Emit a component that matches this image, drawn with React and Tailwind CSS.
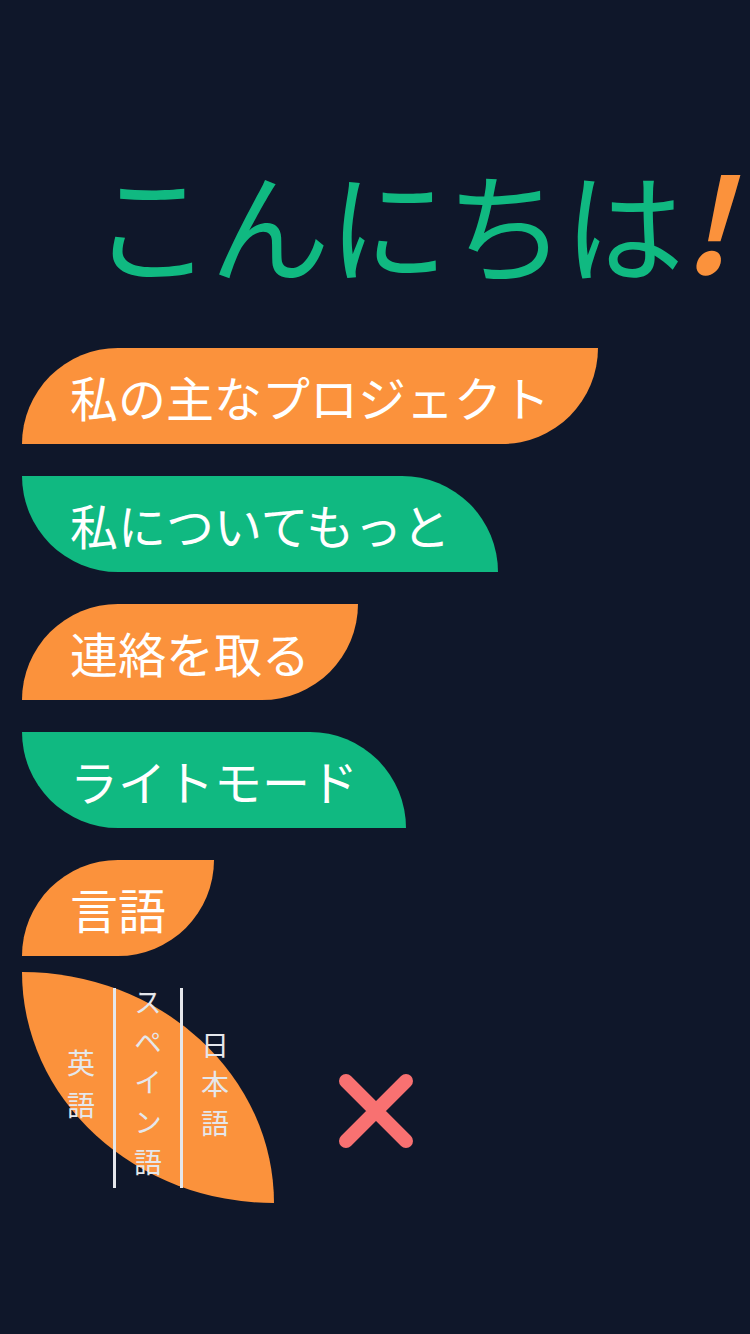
import React from 'react'

const FONT = { fontFamily: "'Noto Sans CJK JP', 'Noto Sans', sans-serif" }

const menu = [
  { label: '私の主なプロジェクト', tone: 'orange', width: 'w-[576px]' },
  { label: '私についてもっと', tone: 'green', width: 'w-[476px]' },
  { label: '連絡を取る', tone: 'orange', width: 'w-[336px]' },
  { label: 'ライトモード', tone: 'green', width: 'w-[384px]' },
  { label: '言語', tone: 'orange', width: 'w-[192px]' },
]

function MenuButton({ label, tone, width }) {
  const shape =
    tone === 'orange'
      ? 'bg-[#fb923c] rounded-tl-[100px] rounded-br-[100px]'
      : 'bg-[#10b981] rounded-tr-[100px] rounded-bl-[100px]'
  return (
    <button
      className={`${width} ${shape} h-24 flex items-center pl-12 text-white text-[48px] leading-none whitespace-nowrap`}
    >
      {label}
    </button>
  )
}

function LanguagePicker() {
  return (
    <div className="flex items-start">
      {/* leaf-shaped panel */}
      <div className="w-[252px] h-[231px] bg-[#fb923c] rounded-tr-[100%] rounded-bl-[100%] flex items-center justify-center">
        <div className="h-[200px] flex items-center px-[18px] border-r-[3px] border-[#e5e7eb]">
          <span className="[writing-mode:vertical-rl] text-[28px] tracking-[14px] leading-none text-[#e5e7eb] mt-[6px]">英語</span>
        </div>
        <div className="h-[200px] flex items-center px-[18px] border-r-[3px] border-[#e5e7eb]">
          <span className="[writing-mode:vertical-rl] text-[28px] tracking-[12px] leading-none text-[#e5e7eb]">スペイン語</span>
        </div>
        <div className="h-[200px] flex items-center px-[18px]">
          <span className="[writing-mode:vertical-rl] text-[28px] tracking-[11px] leading-none text-[#e5e7eb] mt-[4px]">日本語</span>
        </div>
      </div>

      {/* close */}
      <svg className="ml-16 mt-[101px]" width="76" height="76" viewBox="0 0 76 76" fill="none">
        <path d="M8 8L68 68M68 8L8 68" stroke="#f87171" strokeWidth="14" strokeLinecap="round" />
      </svg>
    </div>
  )
}

export default function App() {
  return (
    <div className="min-h-screen bg-[#0f172a] pl-[22px]" style={FONT}>
      <div className="h-[348px] pt-[152px] pl-[70px] flex items-start">
        <h1 className="text-[120px] leading-none text-[#10b981] font-normal whitespace-nowrap flex items-baseline">
          <span className="tracking-[-2px]">こんにちは</span>
          <span className="text-[#fb923c] italic font-bold text-[130px]">!</span>
        </h1>
      </div>

      <nav className="flex flex-col gap-8">
        {menu.map((m) => (
          <MenuButton key={m.label} {...m} />
        ))}
      </nav>

      <div className="mt-4">
        <LanguagePicker />
      </div>
    </div>
  )
}
